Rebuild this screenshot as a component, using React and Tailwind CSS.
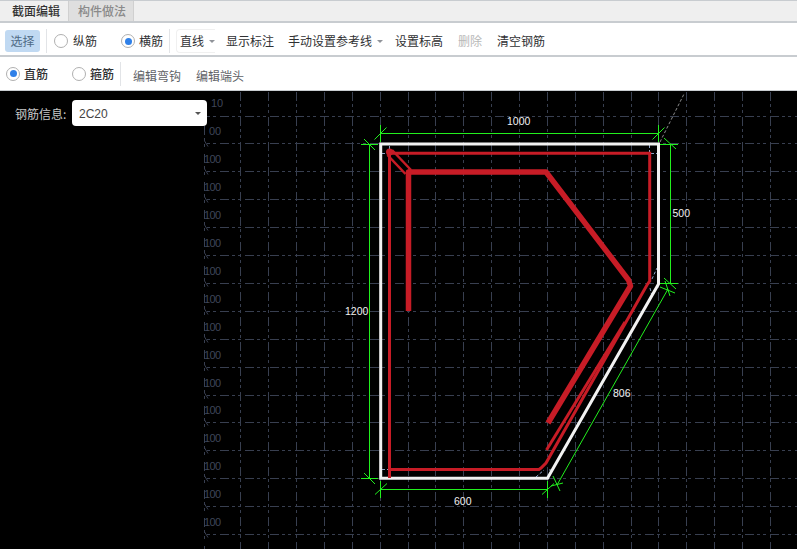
import React from "react";

const FONT = { fontFamily: '"Noto Sans CJK SC", "Liberation Sans", sans-serif' };

const xs = [240.5,268.5,296.5,324.5,352.5,380.5,408.5,435.5,463.5,491.5,519.5,547.5,575.5,603.5,631.5,658.5,686.5,714.5,742.5,770.5];
const ys = Array.from({ length: 16 }, (_, k) => Math.floor(116 + 27.9 * k) + 0.5);

function Radio({ on }) {
  return (
    <span className="w-[14px] h-[14px] rounded-full border border-[#b0b0b0] bg-white flex items-center justify-center shrink-0">
      {on && <span className="w-[7px] h-[7px] rounded-full bg-[#2f80e8]" />}
    </span>
  );
}

function Caret() {
  return <span className="inline-block w-0 h-0 border-x-[3px] border-x-transparent border-t-[3px] border-t-[#909399]" />;
}

function Sep({ cls }) {
  return <span className={"w-px h-[24px] bg-[#e2e4e7] shrink-0 " + cls} />;
}

function Canvas() {
  const green = "#22f01e";
  const G = (p) => <polyline points={p} fill="none" stroke={green} strokeWidth="1" />;
  const gridColor = "#383f50";
  const labelColor = "#3f4658";
  return (
    <svg className="block flex-1 h-full" viewBox="204 91 593 458" style={{ background: "#000" }}>
      {/* grid */}
      <g stroke={gridColor} strokeWidth="1" fill="none">
        {xs.map((x) => <line key={x} x1={x} y1="91" x2={x} y2="549" strokeDasharray="9 3 3 3 3 4" strokeDashoffset="24" />)}
        {ys.map((y) => <line key={y} x1="205" y1={y} x2="797" y2={y} strokeDasharray="9 3 3 3 3 4" strokeDashoffset="10" />)}
        <line x1="204.5" y1="126" x2="204.5" y2="549" strokeDasharray="9 3 3 3 3 7" />
      </g>
      <text x="211" y="107" fontSize="11" fill={labelColor} fontFamily="Liberation Sans, sans-serif">10</text>
      <text x="209" y="135" fontSize="11" fill={labelColor} fontFamily="Liberation Sans, sans-serif">00</text>
      {ys.slice(2).map((y) => (
        <text key={y} x="204" y={y - 9} fontSize="11" textLength="17" fill={labelColor} fontFamily="Liberation Sans, sans-serif">100</text>
      ))}
      {ys.slice(1).map((y) => (
        <line key={y} x1="203" y1={y - 5} x2="208" y2={y + 3} stroke={gridColor} />
      ))}

      {/* gray construction */}
      <line x1="660" y1="142" x2="684" y2="94" stroke="#8a8a8a" strokeDasharray="3 2" />
      <g stroke="#8ea4c8" strokeWidth="1" strokeDasharray="3 2" fill="none">
        <line x1="649.5" y1="145" x2="649.5" y2="152" />
        <line x1="651" y1="153.5" x2="657" y2="153.5" />
        <line x1="389.5" y1="146" x2="389.5" y2="150" />
        <line x1="382" y1="153.5" x2="387" y2="153.5" />
        <line x1="382" y1="469.5" x2="388" y2="469.5" />
        <line x1="652" y1="279" x2="657" y2="268" />
        <line x1="536" y1="477" x2="544" y2="470" />
        <line x1="549" y1="470" x2="552" y2="470" />
        <line x1="650" y1="288" x2="652" y2="296" />
      </g>

      {/* white outline */}
      <polygon points="380.7,144 658.5,144 658.5,284 547.5,478.3 380.7,478.3" fill="none" stroke="#f2f2f2" strokeWidth="3" />

      {/* outer red */}
      <g stroke="#c71c26" fill="none">
        <polyline points="389.5,478 389.5,153.3 649.7,153.3 649.7,281 647,285 546,463 541,468 539,469.5 389.5,469.5" strokeWidth="3" />
        <polyline points="546.5,450 625,322" strokeWidth="3" />
        <polyline points="392,150 411,170" strokeWidth="2.5" />
        <polyline points="387.5,155 405.5,174" strokeWidth="2.5" />
        <polyline points="408.5,311 408.5,172 546,172 628.5,280 630.5,286 548,423" strokeWidth="5.5" strokeLinejoin="round" />
      </g>
      <circle cx="389.5" cy="152" r="3.5" fill="#c71c26" />

      {/* dimensions */}
      {G("380.5,133.5 658.5,133.5")}
      {G("380.5,125 380.5,142")}
      {G("374.5,139.5 386.5,127.5")}
      {G("658.5,125 658.5,142")}
      {G("652.5,139.5 664.5,127.5")}
      {G("369.5,144 369.5,478")}
      {G("361,144.5 378,144.5")}
      {G("364,139 375,150")}
      {G("361,478.5 378,478.5")}
      {G("364,473 375,484")}
      {G("670.5,144 670.5,283")}
      {G("660,144.5 678,144.5")}
      {G("664,138 676,149")}
      {G("660,283.5 678,283.5")}
      {G("664,278 676,289")}
      {G("380.5,489.5 547.5,489.5")}
      {G("380.5,481 380.5,498")}
      {G("375,494.5 387,483.5")}
      {G("547.5,481 547.5,498")}
      {G("542,494.5 554,483.5")}
      {G("557,485 668,289")}
      {G("553,476 560,491")}
      {G("551,486 563,483")}
      {G("660,287 675,293")}
      {G("665,281 670,296")}

      {/* labels */}
      <g fill="#f0f0f0" fontSize="10.5" fontFamily="Liberation Sans, sans-serif">
        <text x="507" y="125">1000</text>
        <text x="672.5" y="217">500</text>
        <text x="345" y="315">1200</text>
        <text x="613" y="397">806</text>
        <text x="454" y="505">600</text>
      </g>
    </svg>
  );
}

export default function App() {
  return (
    <div className="w-[797px] h-[549px] overflow-hidden flex flex-col bg-white text-[12px] text-[#303133]" style={FONT}>
      {/* tabs */}
      <div className="h-[23px] flex bg-[#efefef] border-t border-t-[#c8ccd0] border-b-2 border-b-[#c8ccd0] leading-[20px] shrink-0">
        <div className="w-[68px] pl-[12px] font-medium text-[#333]">截面编辑</div>
        <div className="w-[66px] pl-[9px] bg-[#dfdfdf] border-x border-x-[#d0d0d0] font-medium text-[#8a8a8a]">构件做法</div>
      </div>

      {/* toolbar 1 */}
      <div className="h-[34px] flex items-center pl-[5px] pt-[4px] border-b-2 border-b-[#c8ccd0] shrink-0">
        <div className="w-[35px] h-[22px] rounded-[3px] bg-[#c0d9f2] text-[#4f6b85] flex items-center justify-center">选择</div>
        <Sep cls="ml-[6px]" />
        <span className="ml-[7px]"><Radio /></span>
        <span className="ml-[5px]">纵筋</span>
        <span className="ml-[24px]"><Radio on /></span>
        <span className="ml-[4px]">横筋</span>
        <Sep cls="ml-[6px]" />
        <span className="ml-[6px] h-[24px] pl-[3px] flex items-center border-l border-y border-[#f0f0f0] rounded-l-[4px]">
          <span>直线</span>
          <span className="ml-[5px] flex"><Caret /></span>
        </span>
        <span className="ml-[11px]">显示标注</span>
        <span className="ml-[14px]">手动设置参考线</span>
        <span className="ml-[5px] flex"><Caret /></span>
        <span className="ml-[12px]">设置标高</span>
        <span className="ml-[15px] text-[#b8b8b8]">删除</span>
        <span className="ml-[15px]">清空钢筋</span>
      </div>

      {/* toolbar 2 */}
      <div className="h-[34px] flex items-center pl-[6px] border-b border-b-[#c8ccd0] shrink-0">
        <Radio on />
        <span className="ml-[4px] font-medium">直筋</span>
        <span className="ml-[24px]"><Radio /></span>
        <span className="ml-[4px] font-medium">箍筋</span>
        <Sep cls="ml-[6px]" />
        <span className="ml-[12px] text-[#606266] pt-[4px]">编辑弯钩</span>
        <span className="ml-[15px] text-[#606266] pt-[4px]">编辑端头</span>
      </div>

      {/* body */}
      <div className="flex-1 flex min-h-0 bg-black">
        <div className="w-[204px] shrink-0 relative z-10">
          <div className="flex items-center pl-[15px] pt-[9px] w-[207px]">
            <span className="text-[#c8c8c8] w-[57px] pt-px">钢筋信息:</span>
            <div className="w-[135px] h-[26px] bg-white rounded-[4px] flex items-center justify-between pl-[7px] pr-[6px] text-[#444]">
              <span className="pt-px" style={{ fontFamily: '"Liberation Sans", sans-serif' }}>2C20</span>
              <span className="flex"><span className="inline-block w-0 h-0 border-x-[3px] border-x-transparent border-t-[3px] border-t-[#555]" /></span>
            </div>
          </div>
        </div>
        <Canvas />
      </div>
    </div>
  );
}
